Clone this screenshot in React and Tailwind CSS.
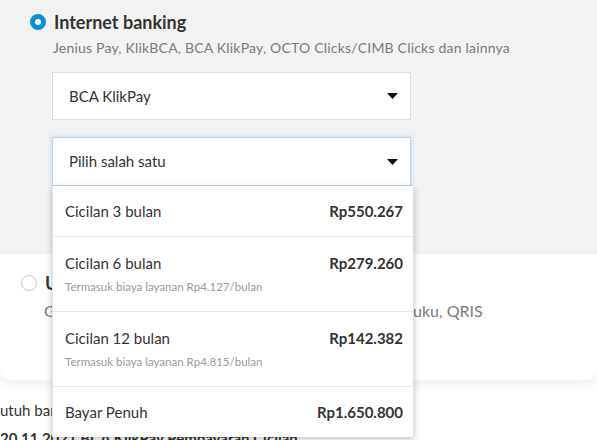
import React from 'react';

const Caret = () => (
  <svg width="11" height="6" viewBox="0 0 11 6" className="shrink-0">
    <path d="M0 0 H11 L5.5 6 Z" fill="#111" />
  </svg>
);

const options = [
  { label: 'Cicilan 3 bulan', price: 'Rp550.267' },
  { label: 'Cicilan 6 bulan', price: 'Rp279.260', note: 'Termasuk biaya layanan Rp4.127/bulan' },
  { label: 'Cicilan 12 bulan', price: 'Rp142.382', note: 'Termasuk biaya layanan Rp4.815/bulan' },
  { label: 'Bayar Penuh', price: 'Rp1.650.800' },
];

const App = () => {
  return (
    <div className="relative h-[440px] w-full overflow-hidden bg-white font-['Lato','Noto_Sans',sans-serif] text-[#333]">
      {/* selected method */}
      <div className="h-[254px] bg-[#f2f2f2] pl-[30px] pt-[10px]">
        <div className="flex h-6 items-center gap-2">
          <span className="h-4 w-4 rounded-full border-[5px] border-[#0b8fd8] bg-white" />
          <span className="text-[18px] font-bold leading-6 text-[#333]">Internet banking</span>
        </div>
        <p className="ml-[23px] mt-[4px] text-[14px] leading-5 tracking-[0.2px] text-[#7a7a7a]">
          Jenius Pay, KlikBCA, BCA KlikPay, OCTO Clicks/CIMB Clicks dan lainnya
        </p>

        <div className="ml-[22px] mt-[14px] flex h-[48px] w-[359px] items-center justify-between border border-[#dcdcdc] bg-white pl-[16px] pr-[12px]">
          <span className="text-[15px]">BCA KlikPay</span>
          <Caret />
        </div>

        <div className="relative ml-[22px] mt-[17px] w-[359px]">
          <div className="flex h-[49px] items-center justify-between border border-[#b9d6ee] bg-white pl-[16px] pr-[12px] shadow-[0_0_4px_rgba(120,170,215,0.45)]">
            <span className="text-[15px]">Pilih salah satu</span>
            <Caret />
          </div>

          <div className="absolute left-0 top-full z-10 w-[362px] border-l border-r border-[#e2e2e2] bg-white shadow-[0_2px_6px_rgba(0,0,0,0.25)]">
            {options.map((opt, i) => (
              <div
                key={opt.label}
                className={`pl-[12px] pr-[10px] ${i > 0 ? 'border-t border-[#e8e8e8]' : ''} ${opt.note ? 'pb-[18px] pt-[16px]' : 'pb-[15px] pt-[15px]'}`}
              >
                <div className="flex h-5 items-center justify-between">
                  <span className="text-[15px] leading-5">{opt.label}</span>
                  <span className="text-[15px] font-bold leading-5 text-[#333]">{opt.price}</span>
                </div>
                {opt.note && (
                  <div className="mt-[8px] text-[11.5px] leading-3 text-[#9a9a9a]">{opt.note}</div>
                )}
              </div>
            ))}
          </div>
        </div>
      </div>

      {/* other method */}
      <div className="h-[126px] rounded-b-[12px] bg-white pl-[21px] pt-[17px] shadow-[0_6px_10px_rgba(0,0,0,0.05)]">
        <div className="flex h-6 items-center gap-2">
          <span className="h-4 w-4 rounded-full border border-[#c8c8c8] bg-white" />
          <span className="text-[18px] font-bold leading-6">Uang elektronik</span>
        </div>
        <p className="ml-[23px] mt-[6px] text-[16px] leading-5 text-[#7a7a7a]">
          GoPay, OVO, DANA, LinkAja, ShopeePay, Jenius, Sakuku, QRIS
        </p>
      </div>

      <div className="pt-[20px] text-[15px] leading-5 text-[#333]">
        <p>utuh bantuan untuk memilih metode pembayaran?</p>
        <p className="mt-[8px] font-bold">20.11.2021 BCA KlikPay Pembayaran Cicilan</p>
      </div>
    </div>
  );
};

export default App;
